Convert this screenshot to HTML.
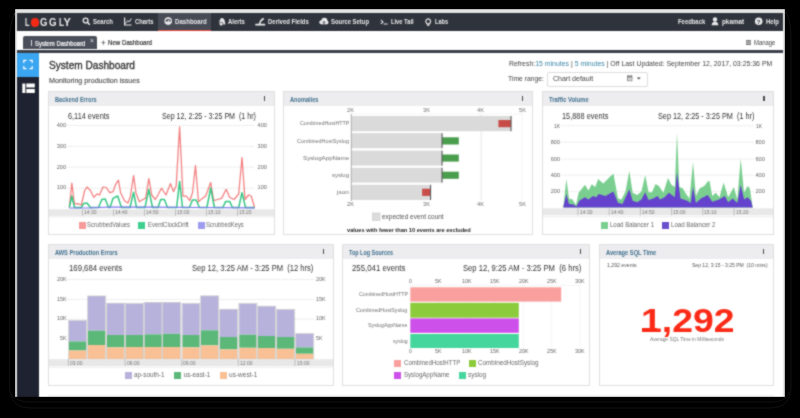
<!DOCTYPE html>
<html><head><meta charset="utf-8"><title>Loggly System Dashboard</title>
<style>
html,body{margin:0;padding:0;}
body{width:800px;height:418px;background:#000;position:relative;overflow:hidden;font-family:"Liberation Sans",sans-serif;}
.b{position:absolute;box-sizing:content-box;}
.t{position:absolute;white-space:nowrap;line-height:1;transform-origin:0 0;}
</style></head><body>
<svg width="0" height="0" style="position:absolute;left:0;top:0"><filter id="soft" x="-1%" y="-1%" width="102%" height="102%" color-interpolation-filters="sRGB"><feConvolveMatrix order="3" kernelMatrix="1 2 1 2 10 2 1 2 1" preserveAlpha="true" edgeMode="duplicate"/></filter></svg>
<div id="page" style="position:absolute;left:0;top:0;width:800px;height:418px;filter:url(#soft)">
<svg class="b" style="left:0;top:0" width="800" height="418"><path d="M15 13 Q9.5 22 9.5 44 L9.5 385 Q9.5 408 30 408 L770 408 Q791 408 791 386 L791 40 Q791 20 786 12" fill="none" stroke="#171717" stroke-width="1"/><path d="M10 392 Q14 402 30 402 L772 402 Q786 402 789 392" fill="none" stroke="#141414" stroke-width="1"/></svg>
<div class="b" style="left:15px;top:9px;width:770px;height:388px;background:#e4e4e4;"></div>
<div class="b" style="left:17px;top:13px;width:766px;height:384px;background:#ffffff;"></div>
<div class="b" style="left:17px;top:13px;width:766px;height:18px;background:#2f333b;"></div>
<div class="b" style="left:158px;top:13px;width:53px;height:18px;background:#464b55;"></div>
<div class="b" style="left:158px;top:29.5px;width:53px;height:1.5px;background:#e8473b;"></div>
<span class="t " style="left:25.20px;top:16.59px;font-size:11.00px;color:#e9eaec;font-weight:bold;transform:scaleX(0.655);">L</span>
<div class="b" style="left:30.5px;top:18.3px;width:8.5px;height:8.5px;border-radius:50%;background:#f42a16"></div>
<span class="t " style="left:40.30px;top:16.59px;font-size:11.00px;color:#e9eaec;font-weight:bold;transform:scaleX(0.865);">G</span>
<span class="t " style="left:49.40px;top:16.59px;font-size:11.00px;color:#e9eaec;font-weight:bold;transform:scaleX(0.888);">G</span>
<span class="t " style="left:58.80px;top:16.59px;font-size:11.00px;color:#e9eaec;font-weight:bold;transform:scaleX(0.744);">L</span>
<span class="t " style="left:63.40px;top:16.59px;font-size:11.00px;color:#e9eaec;font-weight:bold;">Y</span>
<span class="t " style="left:93.00px;top:18.27px;font-size:7.00px;color:#e9eaec;font-weight:bold;transform:scaleX(0.857);">Search</span>
<span class="t " style="left:134.50px;top:18.27px;font-size:7.00px;color:#e9eaec;font-weight:bold;transform:scaleX(0.834);">Charts</span>
<span class="t " style="left:175.00px;top:18.27px;font-size:7.00px;color:#e9eaec;font-weight:bold;transform:scaleX(0.870);">Dashboard</span>
<span class="t " style="left:228.00px;top:18.27px;font-size:7.00px;color:#e9eaec;font-weight:bold;transform:scaleX(0.847);">Alerts</span>
<span class="t " style="left:268.20px;top:18.27px;font-size:7.00px;color:#e9eaec;font-weight:bold;transform:scaleX(0.853);">Derived Fields</span>
<span class="t " style="left:331.00px;top:18.27px;font-size:7.00px;color:#e9eaec;font-weight:bold;transform:scaleX(0.842);">Source Setup</span>
<span class="t " style="left:391.00px;top:18.27px;font-size:7.00px;color:#e9eaec;font-weight:bold;transform:scaleX(0.822);">Live Tail</span>
<span class="t " style="left:435.00px;top:18.27px;font-size:7.00px;color:#e9eaec;font-weight:bold;transform:scaleX(0.796);">Labs</span>
<span class="t " style="left:678.00px;top:18.27px;font-size:7.00px;color:#e9eaec;font-weight:bold;transform:scaleX(0.842);">Feedback</span>
<span class="t " style="left:722.00px;top:18.27px;font-size:7.00px;color:#e9eaec;font-weight:bold;transform:scaleX(0.906);">pkamat</span>
<span class="t " style="left:765.70px;top:18.27px;font-size:7.00px;color:#e9eaec;font-weight:bold;transform:scaleX(0.857);">Help</span>
<svg class="b" style="left:0;top:0" width="800" height="40">
<circle cx="85.6" cy="20.6" r="2.4" fill="none" stroke="#e9eaec" stroke-width="1.3"/><line x1="87.4" y1="22.4" x2="89.8" y2="24.8" stroke="#e9eaec" stroke-width="1.5"/>
<path d="M124.6 17.5 V25 H131.6" fill="none" stroke="#e9eaec" stroke-width="1.2"/><path d="M125.5 23.5 L127.8 20.5 L129.3 22 L131.3 18.5" fill="none" stroke="#e9eaec" stroke-width="1"/>
<circle cx="168.2" cy="21.1" r="3.8" fill="#e9eaec"/><path d="M165.5 21.6 A2.7 2.5 0 0 1 170.9 21.6 Z" fill="#464b55"/><circle cx="168.6" cy="20.9" r="0.8" fill="#e9eaec"/>
<path d="M218.8 24.2 Q219.6 19.6 220.6 18.6 Q222 17.4 223.4 18.4 Q224.6 19.4 225.2 23 L225.3 24.6 Z" fill="#e9eaec"/><circle cx="221.2" cy="24" r="1.9" fill="#e9eaec" stroke="#2f333b" stroke-width="0.7"/>
<path d="M256 24.7 L264.5 24.7" fill="none" stroke="#e9eaec" stroke-width="1.7" stroke-linecap="round"/><path d="M259.6 24.4 Q260.2 20.5 263.3 18.8" fill="none" stroke="#e9eaec" stroke-width="1.6" stroke-linecap="round"/>
<circle cx="324.4" cy="20.7" r="3" fill="#e9eaec"/><circle cx="321.3" cy="22.3" r="2" fill="#e9eaec"/><circle cx="326.6" cy="22.4" r="1.9" fill="#e9eaec"/><rect x="321.3" y="22" width="5.3" height="2.3" fill="#e9eaec"/><path d="M324 24.3 V21.6 M322.9 22.6 L324 21.4 L325.1 22.6" stroke="#2f333b" stroke-width="0.9" fill="none"/>
<path d="M380.8 19.9 L383 21.9 L380.8 23.9 M383.6 24 H387.6" fill="none" stroke="#e9eaec" stroke-width="1.1"/>
<path d="M428.2 18.9 A2.4 2.4 0 0 1 430.3 22.4 L429.4 23.8 H427 L426.1 22.4 A2.4 2.4 0 0 1 428.2 18.9 Z" fill="none" stroke="#e9eaec" stroke-width="1.2"/><rect x="427" y="24.4" width="2.4" height="1.4" fill="#e9eaec"/>
<circle cx="715" cy="19.5" r="2.2" fill="#e9eaec"/><path d="M711.6 25.2 Q712 21.8 715 21.8 Q718 21.8 718.4 25.2 Z" fill="#e9eaec"/>
<circle cx="758.7" cy="21.2" r="3.8" fill="#e9eaec"/><text x="758.7" y="23.6" font-size="6" font-weight="bold" text-anchor="middle" fill="#2f333b" font-family="Liberation Sans">?</text>
</svg>
<div class="b" style="left:23px;top:36px;width:74px;height:13px;background:#4a4f5a;border-radius:2px 2px 0 0"></div>
<div class="b" style="left:30.8px;top:40px;width:1px;height:5.5px;background:#d9dbe0;"></div>
<span class="t " style="left:34.60px;top:40.27px;font-size:7.00px;color:#ffffff;-webkit-text-stroke:0.2px #ffffff;transform:scaleX(0.847);">System Dashboard</span>
<span class="t " style="left:89.50px;top:36.87px;font-size:7.00px;color:#e6e7ea;transform:scaleX(0.978);">×</span>
<span class="t " style="left:100.80px;top:38.60px;font-size:8.50px;color:#333;">+</span>
<span class="t " style="left:108.00px;top:40.04px;font-size:6.80px;color:#333;-webkit-text-stroke:0.2px #333;transform:scaleX(0.902);">New Dashboard</span>
<svg class="b" style="left:746px;top:40px" width="6" height="5"><rect x="0" y="0" width="5" height="5" fill="#7a7a7a"/><line x1="0" y1="1.7" x2="5" y2="1.7" stroke="#fff" stroke-width="0.5"/><line x1="0" y1="3.3" x2="5" y2="3.3" stroke="#fff" stroke-width="0.5"/></svg>
<span class="t " style="left:753.70px;top:40.27px;font-size:6.30px;color:#444;transform:scaleX(0.940);">Manage</span>
<div class="b" style="left:17px;top:50px;width:766px;height:3px;background:#3b3f49;"></div>
<div class="b" style="left:17px;top:53px;width:22px;height:344px;background:#1f2230;"></div>
<div class="b" style="left:17px;top:53px;width:22px;height:24px;background:#3aa5f1;"></div>
<svg class="b" style="left:17px;top:53px" width="22" height="50">
<path d="M6.8 10 V7.3 H9.5 M12.5 7.3 H15.2 V10 M15.2 13 V15.7 H12.5 M9.5 15.7 H6.8 V13" fill="none" stroke="#fff" stroke-width="1.2"/>
<rect x="5.3" y="30.5" width="3" height="9.5" fill="#fff"/><rect x="9.3" y="30.5" width="8.5" height="4" fill="#fff"/><rect x="9.3" y="36" width="8.5" height="4" fill="#fff"/>
</svg>
<span class="t " style="left:49.00px;top:59.72px;font-size:11.20px;color:#353535;-webkit-text-stroke:0.35px #353535;transform:scaleX(0.903);">System Dashboard</span>
<span class="t " style="left:49.00px;top:77.34px;font-size:7.40px;color:#505050;-webkit-text-stroke:0.15px #505050;transform:scaleX(0.966);">Monitoring production issues</span>
<span class="t" style="left:508.7px;top:60.99px;font-size:7.1px;color:#444;transform:scaleX(0.976)" id="refl">Refresh:<span style="color:#3b86a8">15 minutes</span> | <span style="color:#3b86a8">5 minutes</span> | Off Last Updated: September 12, 2017, 03:25:36 PM</span>
<span class="t " style="left:507.90px;top:76.09px;font-size:7.10px;color:#444;transform:scaleX(0.954);">Time range:</span>
<div class="b" style="left:547px;top:72px;width:98.5px;height:13px;border:1px solid #dcdcdc;border-radius:2px;background:#fff"></div>
<span class="t " style="left:553.40px;top:76.09px;font-size:7.10px;color:#444;transform:scaleX(0.989);">Chart default</span>
<svg class="b" style="left:626px;top:74px" width="18" height="10"><rect x="1" y="1.6" width="5.4" height="5.6" fill="#8a8a8a"/><rect x="1.8" y="3.6" width="3.8" height="2.9" fill="#d6d6d6"/><rect x="1.8" y="1" width="0.8" height="1.2" fill="#666"/><rect x="4.8" y="1" width="0.8" height="1.2" fill="#666"/><path d="M10.8 3.4 L14.8 3.4 L12.8 5.6 Z" fill="#444"/></svg>
<div class="b panel" style="left:48px;top:91px;width:225px;height:142px;border:1px solid #dfdfdf;background:#fff"></div>
<div class="b" style="left:49px;top:92px;width:225px;height:13.6px;background:#ededef;"></div>
<span class="t " style="left:54.50px;top:96.60px;font-size:6.50px;color:#41708f;font-weight:bold;transform:scaleX(0.861);">Backend Errors</span>
<div class="b" style="left:263.7px;top:96px;width:1.3px;height:5px;background:#4a4a4a;"></div>
<div class="b panel" style="left:283px;top:91px;width:248px;height:142px;border:1px solid #dfdfdf;background:#fff"></div>
<div class="b" style="left:284px;top:92px;width:248px;height:13.6px;background:#ededef;"></div>
<span class="t " style="left:289.50px;top:96.60px;font-size:6.50px;color:#41708f;font-weight:bold;transform:scaleX(0.867);">Anomalies</span>
<div class="b" style="left:522.1px;top:96px;width:1.3px;height:5px;background:#4a4a4a;"></div>
<div class="b panel" style="left:542px;top:91px;width:230px;height:142px;border:1px solid #dfdfdf;background:#fff"></div>
<div class="b" style="left:543px;top:92px;width:230px;height:13.6px;background:#ededef;"></div>
<span class="t " style="left:548.50px;top:96.60px;font-size:6.50px;color:#41708f;font-weight:bold;transform:scaleX(0.896);">Traffic Volume</span>
<div class="b" style="left:763.3px;top:96px;width:1.3px;height:5px;background:#4a4a4a;"></div>
<div class="b panel" style="left:48px;top:244px;width:284px;height:140px;border:1px solid #dfdfdf;background:#fff"></div>
<div class="b" style="left:49px;top:245px;width:284px;height:13.6px;background:#ededef;"></div>
<span class="t " style="left:54.50px;top:249.60px;font-size:6.50px;color:#41708f;font-weight:bold;transform:scaleX(0.868);">AWS Production Errors</span>
<div class="b" style="left:322.7px;top:249px;width:1.3px;height:5px;background:#4a4a4a;"></div>
<div class="b panel" style="left:342px;top:244px;width:246px;height:140px;border:1px solid #dfdfdf;background:#fff"></div>
<div class="b" style="left:343px;top:245px;width:246px;height:13.6px;background:#ededef;"></div>
<span class="t " style="left:348.50px;top:249.60px;font-size:6.50px;color:#41708f;font-weight:bold;transform:scaleX(0.836);">Top Log Sources</span>
<div class="b" style="left:579.9px;top:249px;width:1.3px;height:5px;background:#4a4a4a;"></div>
<div class="b panel" style="left:599px;top:244px;width:173px;height:140px;border:1px solid #dfdfdf;background:#fff"></div>
<div class="b" style="left:600px;top:245px;width:173px;height:13.6px;background:#ededef;"></div>
<span class="t " style="left:605.50px;top:249.60px;font-size:6.50px;color:#41708f;font-weight:bold;transform:scaleX(0.876);">Average SQL Time</span>
<div class="b" style="left:763.1999999999999px;top:249px;width:1.3px;height:5px;background:#4a4a4a;"></div>
<div class="b" style="left:48px;top:395px;width:726px;height:1px;background:#ececec;"></div>
<span class="t " style="left:67.50px;top:111.77px;font-size:8.30px;color:#333;transform:scaleX(0.885);">6,114 events</span>
<span class="t " style="left:161.50px;top:111.77px;font-size:8.30px;color:#333;transform:scaleX(0.856);">Sep 12, 2:25 - 3:25 PM  (1 hr)</span>
<span class="t " style="left:56.70px;top:122.76px;font-size:5.60px;color:#666;">400</span>
<span class="t " style="left:257.60px;top:122.76px;font-size:5.60px;color:#666;">400</span>
<span class="t " style="left:56.70px;top:143.66px;font-size:5.60px;color:#666;">300</span>
<span class="t " style="left:257.60px;top:143.66px;font-size:5.60px;color:#666;">300</span>
<span class="t " style="left:56.70px;top:164.56px;font-size:5.60px;color:#666;">200</span>
<span class="t " style="left:257.60px;top:164.56px;font-size:5.60px;color:#666;">200</span>
<span class="t " style="left:56.70px;top:185.46px;font-size:5.60px;color:#666;">100</span>
<span class="t " style="left:257.60px;top:185.46px;font-size:5.60px;color:#666;">100</span>
<svg class="b" style="left:0;top:0" width="800" height="418"><line x1="67" y1="125.5" x2="254" y2="125.5" stroke="#d6d6d6" stroke-width="0.8" stroke-dasharray="1 1"/><line x1="67" y1="146.4" x2="254" y2="146.4" stroke="#d6d6d6" stroke-width="0.8" stroke-dasharray="1 1"/><line x1="67" y1="167.3" x2="254" y2="167.3" stroke="#d6d6d6" stroke-width="0.8" stroke-dasharray="1 1"/><line x1="67" y1="188.2" x2="254" y2="188.2" stroke="#d6d6d6" stroke-width="0.8" stroke-dasharray="1 1"/><rect x="49" y="209.3" width="225" height="6.5" fill="#e8e8e8"/><line x1="82.5" y1="209.3" x2="82.5" y2="215.8" stroke="#aaa" stroke-width="0.7"/><line x1="113.5" y1="209.3" x2="113.5" y2="215.8" stroke="#aaa" stroke-width="0.7"/><line x1="144.5" y1="209.3" x2="144.5" y2="215.8" stroke="#aaa" stroke-width="0.7"/><line x1="175.5" y1="209.3" x2="175.5" y2="215.8" stroke="#aaa" stroke-width="0.7"/><line x1="206.5" y1="209.3" x2="206.5" y2="215.8" stroke="#aaa" stroke-width="0.7"/><line x1="237.5" y1="209.3" x2="237.5" y2="215.8" stroke="#aaa" stroke-width="0.7"/><line x1="49" y1="216.8" x2="274" y2="216.8" stroke="#e6e6e6" stroke-width="0.8"/><polyline points="69.3,207.5 71.8,183.2 74.5,204.0 77.9,203.6 81.3,205.0 84.7,190.5 87.0,187.0 90.4,190.5 93.8,197.3 97.2,193.9 99.5,195.0 103.0,187.0 106.3,187.5 109.7,192.7 113.1,191.6 115.4,184.8 118.4,180.2 120.6,192.7 124.5,200.7 127.9,203.0 130.2,197.3 133.6,175.7 135.9,192.7 139.3,201.8 142.7,199.5 145.6,198.4 148.8,178.6 151.8,195.0 155.2,199.5 158.0,195.0 161.4,188.2 166.0,195.0 170.5,183.6 173.5,191.6 176.2,186.0 179.6,126.8 183.0,196.0 186.4,196.0 189.8,200.7 192.5,192.7 195.5,165.5 198.5,201.8 202.3,198.4 205.7,196.0 210.7,182.5 213.7,200.7 217.5,199.5 221.6,198.4 226.2,189.3 229.6,197.3 234.0,199.5 238.7,194.0 242.0,157.5 245.0,199.5 248.5,195.0 251.2,196.0 254.6,207.5" fill="none" stroke="#f37e7e" stroke-width="1.25" stroke-linejoin="round"/><polyline points="69.3,207.5 71.8,196.0 74.5,207.5 81.3,207.5 83.6,203.6 87.0,203.0 90.4,207.5 98.5,207.5 101.8,199.5 105.2,199.0 108.6,207.5 110.0,207.5 113.0,198.4 117.7,196.0 121.5,207.5 130.0,207.5 133.6,192.3 136.5,207.5 145.0,207.5 148.8,189.3 152.5,207.5 158.0,207.5 160.7,199.5 164.4,199.5 167.5,207.5 176.6,207.5 179.6,181.4 182.5,207.5 189.4,207.5 192.5,200.0 196.2,200.0 199.4,207.5 206.9,207.5 210.7,188.0 214.4,207.5 222.8,207.5 225.7,201.4 229.6,201.4 232.5,207.5 238.7,207.5 242.0,192.7 245.5,207.5 254.6,207.5" fill="none" stroke="#35c683" stroke-width="1.5" stroke-linejoin="round"/><polyline points="69.3,208.0 90.0,207.8 110.0,207.0 150.0,207.2 200.0,207.5 254.6,207.8" fill="none" stroke="#7a76ee" stroke-width="1.2"/></svg>
<span class="t " style="left:84.00px;top:209.93px;font-size:5.40px;color:#777;transform:scaleX(0.925);">14:30</span>
<span class="t " style="left:115.00px;top:209.93px;font-size:5.40px;color:#777;transform:scaleX(0.925);">14:40</span>
<span class="t " style="left:146.00px;top:209.93px;font-size:5.40px;color:#777;transform:scaleX(0.925);">14:50</span>
<span class="t " style="left:177.00px;top:209.93px;font-size:5.40px;color:#777;transform:scaleX(0.925);">15:00</span>
<span class="t " style="left:208.00px;top:209.93px;font-size:5.40px;color:#777;transform:scaleX(0.925);">15:10</span>
<span class="t " style="left:239.00px;top:209.93px;font-size:5.40px;color:#777;transform:scaleX(0.925);">15:20</span>
<div class="b" style="left:78.6px;top:221.7px;width:7px;height:7px;background:#f69a9a;"></div>
<span class="t " style="left:87.00px;top:221.98px;font-size:6.40px;color:#686868;transform:scaleX(0.925);">ScrubbedValues</span>
<div class="b" style="left:138.3px;top:221.7px;width:7px;height:7px;background:#3fcf8e;"></div>
<span class="t " style="left:147.60px;top:221.98px;font-size:6.40px;color:#686868;transform:scaleX(0.925);">EventClockDrift</span>
<div class="b" style="left:197.6px;top:221.7px;width:7px;height:7px;background:#9f9cf0;"></div>
<span class="t " style="left:206.20px;top:221.98px;font-size:6.40px;color:#686868;transform:scaleX(0.908);">ScrubbedKeys</span>
<svg class="b" style="left:0;top:0" width="800" height="418"><line x1="351" y1="114" x2="522" y2="114" stroke="#e2e2e2" stroke-width="0.8" stroke-dasharray="1 1"/><line x1="522" y1="114" x2="522" y2="200.5" stroke="#e2e2e2" stroke-width="0.8" stroke-dasharray="1 1"/><line x1="481.1" y1="114" x2="481.1" y2="200.5" stroke="#e0e0e0" stroke-width="0.8"/><rect x="351.5" y="116" width="159.5" height="15.199999999999989" fill="#dadada"/><rect x="498.4" y="120" width="12.600000000000023" height="7.200000000000003" fill="#c84d49"/><rect x="510.5" y="116" width="1.1" height="15.199999999999989" fill="#5a5a5a"/><rect x="351.5" y="133.2" width="90.5" height="15.0" fill="#dadada"/><rect x="442" y="137.3" width="16.8" height="7.199999999999989" fill="#4a9d4d"/><rect x="441.5" y="133.2" width="1.1" height="15.0" fill="#5a5a5a"/><rect x="351.5" y="150.6" width="90.5" height="15.0" fill="#dadada"/><rect x="442" y="154.5" width="16.8" height="7.099999999999994" fill="#4a9d4d"/><rect x="441.5" y="150.6" width="1.1" height="15.0" fill="#5a5a5a"/><rect x="351.5" y="167.8" width="90.5" height="14.799999999999983" fill="#dadada"/><rect x="442" y="171.7" width="16.8" height="7.100000000000023" fill="#4a9d4d"/><rect x="441.5" y="167.8" width="1.1" height="14.799999999999983" fill="#5a5a5a"/><rect x="351.5" y="184.8" width="79.0" height="15.199999999999989" fill="#dadada"/><rect x="422.1" y="188.7" width="8.399999999999977" height="7.200000000000017" fill="#c84d49"/><rect x="430.0" y="184.8" width="1.1" height="15.199999999999989" fill="#5a5a5a"/><line x1="351.3" y1="114" x2="351.3" y2="201" stroke="#999" stroke-width="0.8"/><rect x="372.5" y="213" width="7.5" height="7.5" fill="#dcdcdc" stroke="#c8c8c8" stroke-width="0.6"/></svg>
<span class="t " style="left:347.00px;top:108.06px;font-size:5.60px;color:#707070;transform:scaleX(1.022);">2K</span>
<span class="t " style="left:347.00px;top:201.86px;font-size:5.60px;color:#707070;transform:scaleX(1.022);">2K</span>
<span class="t " style="left:423.11px;top:108.06px;font-size:5.60px;color:#707070;transform:scaleX(1.022);">3K</span>
<span class="t " style="left:423.11px;top:201.86px;font-size:5.60px;color:#707070;transform:scaleX(1.022);">3K</span>
<span class="t " style="left:477.10px;top:108.06px;font-size:5.60px;color:#707070;transform:scaleX(1.022);">4K</span>
<span class="t " style="left:477.10px;top:201.86px;font-size:5.60px;color:#707070;transform:scaleX(1.022);">4K</span>
<span class="t " style="left:518.99px;top:108.06px;font-size:5.60px;color:#707070;transform:scaleX(1.022);">5K</span>
<span class="t " style="left:518.99px;top:201.86px;font-size:5.60px;color:#707070;transform:scaleX(1.022);">5K</span>
<span class="t " style="left:299.50px;top:120.35px;font-size:6.20px;color:#707070;transform:scaleX(0.865);">CombinedHostHTTP</span>
<span class="t " style="left:297.00px;top:137.55px;font-size:6.20px;color:#707070;transform:scaleX(0.872);">CombinedHostSyslog</span>
<span class="t " style="left:303.00px;top:154.85px;font-size:6.20px;color:#707070;">SyslogAppName</span>
<span class="t " style="left:332.00px;top:172.05px;font-size:6.20px;color:#707070;transform:scaleX(0.967);">syslog</span>
<span class="t " style="left:337.00px;top:189.25px;font-size:6.20px;color:#707070;transform:scaleX(1.055);">json</span>
<span class="t " style="left:382.00px;top:214.16px;font-size:6.90px;color:#555;transform:scaleX(0.941);">expected event count</span>
<span class="t " style="left:346.70px;top:227.61px;font-size:5.90px;color:#222;font-weight:bold;transform:scaleX(0.959);">values with fewer than 10 events are excluded</span>
<span class="t " style="left:562.00px;top:111.67px;font-size:8.30px;color:#333;transform:scaleX(0.890);">15,888 events</span>
<span class="t " style="left:658.00px;top:111.67px;font-size:8.30px;color:#333;transform:scaleX(0.878);">Sep 12, 2:25 - 3:25 PM  (1 hr)</span>
<span class="t " style="left:553.80px;top:123.56px;font-size:5.60px;color:#666;transform:scaleX(0.905);">1K</span>
<span class="t " style="left:755.50px;top:123.56px;font-size:5.60px;color:#666;transform:scaleX(0.905);">1K</span>
<span class="t " style="left:550.70px;top:140.16px;font-size:5.60px;color:#666;">800</span>
<span class="t " style="left:755.50px;top:140.16px;font-size:5.60px;color:#666;">800</span>
<span class="t " style="left:550.70px;top:156.86px;font-size:5.60px;color:#666;">600</span>
<span class="t " style="left:755.50px;top:156.86px;font-size:5.60px;color:#666;">600</span>
<span class="t " style="left:550.70px;top:173.06px;font-size:5.60px;color:#666;">400</span>
<span class="t " style="left:755.50px;top:173.06px;font-size:5.60px;color:#666;">400</span>
<span class="t " style="left:550.70px;top:189.46px;font-size:5.60px;color:#666;">200</span>
<span class="t " style="left:755.50px;top:189.46px;font-size:5.60px;color:#666;">200</span>
<svg class="b" style="left:0;top:0" width="800" height="418"><line x1="562" y1="125.7" x2="753" y2="125.7" stroke="#d6d6d6" stroke-width="0.8" stroke-dasharray="1 1"/><line x1="562" y1="142.3" x2="753" y2="142.3" stroke="#d6d6d6" stroke-width="0.8" stroke-dasharray="1 1"/><line x1="562" y1="159" x2="753" y2="159" stroke="#d6d6d6" stroke-width="0.8" stroke-dasharray="1 1"/><line x1="562" y1="175.2" x2="753" y2="175.2" stroke="#d6d6d6" stroke-width="0.8" stroke-dasharray="1 1"/><line x1="562" y1="191.6" x2="753" y2="191.6" stroke="#d6d6d6" stroke-width="0.8" stroke-dasharray="1 1"/><polygon points="563.2,207.5 566.4,179.0 569.0,198.4 572.5,199.5 576.0,205.0 578.6,192.7 585.0,184.8 588.4,190.5 591.8,184.3 595.2,187.0 598.2,179.0 603.2,183.6 613.4,173.4 618.0,198.4 621.4,199.5 625.5,191.6 629.3,171.0 632.7,192.7 637.3,195.0 641.4,191.6 645.2,175.2 648.6,192.3 652.0,192.3 655.5,184.0 658.9,186.0 663.4,192.7 668.0,178.0 671.4,184.8 674.8,187.0 677.0,132.5 679.3,187.0 682.7,188.2 686.1,193.9 689.5,198.4 693.0,162.0 695.9,196.0 699.8,188.2 704.3,186.0 707.7,181.4 709.5,181.0 712.3,196.0 715.7,192.7 719.5,197.3 723.6,182.5 728.2,197.3 733.9,187.0 737.3,199.5 740.7,158.6 744.1,192.7 747.5,186.0 749.8,188.2 752.7,207.5" fill="#7acf90"/><polygon points="563.2,207.5 566.4,193.9 569.0,204.0 573.6,204.5 576.4,206.4 579.3,200.7 585.0,197.3 588.4,199.5 593.0,196.0 596.4,197.3 598.6,193.9 605.5,196.0 613.4,191.6 618.0,202.7 622.5,204.0 629.3,189.3 632.7,200.7 637.3,202.3 641.4,199.5 645.2,192.3 648.6,200.0 653.2,198.4 657.7,196.0 660.0,199.5 664.5,197.3 669.0,192.7 674.8,197.3 677.0,172.3 680.5,198.4 687.3,200.7 690.7,203.0 693.0,187.0 695.9,203.0 700.9,198.4 707.7,195.0 712.3,201.8 719.1,199.5 724.8,196.0 728.2,202.3 732.7,198.4 737.3,203.0 740.7,184.8 744.1,199.5 747.5,197.3 751.0,200.7 752.7,207.5" fill="#6442cd"/><rect x="543" y="208.3" width="230" height="7" fill="#e8e8e8"/><line x1="578.0" y1="208.3" x2="578.0" y2="215.3" stroke="#aaa" stroke-width="0.7"/><line x1="609.2" y1="208.3" x2="609.2" y2="215.3" stroke="#aaa" stroke-width="0.7"/><line x1="640.4" y1="208.3" x2="640.4" y2="215.3" stroke="#aaa" stroke-width="0.7"/><line x1="671.6" y1="208.3" x2="671.6" y2="215.3" stroke="#aaa" stroke-width="0.7"/><line x1="702.8" y1="208.3" x2="702.8" y2="215.3" stroke="#aaa" stroke-width="0.7"/><line x1="734.0" y1="208.3" x2="734.0" y2="215.3" stroke="#aaa" stroke-width="0.7"/><line x1="543" y1="216.8" x2="773" y2="216.8" stroke="#e6e6e6" stroke-width="0.8"/></svg>
<span class="t " style="left:579.50px;top:209.63px;font-size:5.40px;color:#777;transform:scaleX(0.925);">14:30</span>
<span class="t " style="left:610.70px;top:209.63px;font-size:5.40px;color:#777;transform:scaleX(0.925);">14:40</span>
<span class="t " style="left:641.90px;top:209.63px;font-size:5.40px;color:#777;transform:scaleX(0.925);">14:50</span>
<span class="t " style="left:673.10px;top:209.63px;font-size:5.40px;color:#777;transform:scaleX(0.925);">15:00</span>
<span class="t " style="left:704.30px;top:209.63px;font-size:5.40px;color:#777;transform:scaleX(0.925);">15:10</span>
<span class="t " style="left:735.50px;top:209.63px;font-size:5.40px;color:#777;transform:scaleX(0.925);">15:20</span>
<div class="b" style="left:600.6px;top:221.5px;width:7px;height:7px;background:#7acf90;"></div>
<span class="t " style="left:609.50px;top:221.78px;font-size:6.40px;color:#686868;transform:scaleX(0.946);">Load Balancer 1</span>
<div class="b" style="left:662px;top:221.5px;width:7px;height:7px;background:#6a4fcd;"></div>
<span class="t " style="left:671.00px;top:221.78px;font-size:6.40px;color:#686868;transform:scaleX(0.955);">Load Balancer 2</span>
<span class="t " style="left:68.70px;top:264.37px;font-size:8.30px;color:#333;transform:scaleX(0.935);">169,684 events</span>
<span class="t " style="left:192.40px;top:264.37px;font-size:8.30px;color:#333;transform:scaleX(0.914);">Sep 12, 3:25 AM - 3:25 PM  (12 hrs)</span>
<span class="t " style="left:56.80px;top:276.66px;font-size:5.60px;color:#666;transform:scaleX(0.973);">20K</span>
<span class="t " style="left:315.60px;top:276.66px;font-size:5.60px;color:#666;transform:scaleX(0.973);">20K</span>
<span class="t " style="left:56.80px;top:296.66px;font-size:5.60px;color:#666;transform:scaleX(0.973);">15K</span>
<span class="t " style="left:315.60px;top:296.66px;font-size:5.60px;color:#666;transform:scaleX(0.973);">15K</span>
<span class="t " style="left:56.80px;top:316.46px;font-size:5.60px;color:#666;transform:scaleX(0.973);">10K</span>
<span class="t " style="left:315.60px;top:316.46px;font-size:5.60px;color:#666;transform:scaleX(0.973);">10K</span>
<span class="t " style="left:60.10px;top:336.46px;font-size:5.60px;color:#666;transform:scaleX(0.934);">5K</span>
<span class="t " style="left:315.60px;top:336.46px;font-size:5.60px;color:#666;transform:scaleX(0.934);">5K</span>
<svg class="b" style="left:0;top:0" width="800" height="418"><line x1="67" y1="279.4" x2="314" y2="279.4" stroke="#d6d6d6" stroke-width="0.8" stroke-dasharray="1 1"/><line x1="67" y1="299.4" x2="314" y2="299.4" stroke="#d6d6d6" stroke-width="0.8" stroke-dasharray="1 1"/><line x1="67" y1="319.2" x2="314" y2="319.2" stroke="#d6d6d6" stroke-width="0.8" stroke-dasharray="1 1"/><line x1="67" y1="339.2" x2="314" y2="339.2" stroke="#d6d6d6" stroke-width="0.8" stroke-dasharray="1 1"/><rect x="69" y="320.6" width="17.4" height="20.799999999999955" fill="#b7b2dc"/><rect x="69" y="341.4" width="17.4" height="9.100000000000023" fill="#5bb879"/><rect x="69" y="350.5" width="17.4" height="8.699999999999989" fill="#f8c094"/><rect x="68.65" y="320.6" width="18.099999999999998" height="38.599999999999966" fill="none" stroke="#c9c9c9" stroke-width="0.7"/><rect x="88" y="296" width="17.4" height="34.69999999999999" fill="#b7b2dc"/><rect x="88" y="330.7" width="17.4" height="14.300000000000011" fill="#5bb879"/><rect x="88" y="345" width="17.4" height="14.199999999999989" fill="#f8c094"/><rect x="87.65" y="296" width="18.099999999999998" height="63.19999999999999" fill="none" stroke="#c9c9c9" stroke-width="0.7"/><rect x="107" y="303.2" width="17.4" height="31.80000000000001" fill="#b7b2dc"/><rect x="107" y="335" width="17.4" height="12.399999999999977" fill="#5bb879"/><rect x="107" y="347.4" width="17.4" height="11.800000000000011" fill="#f8c094"/><rect x="106.65" y="303.2" width="18.099999999999998" height="56.0" fill="none" stroke="#c9c9c9" stroke-width="0.7"/><rect x="125.7" y="303.6" width="17.4" height="31.399999999999977" fill="#b7b2dc"/><rect x="125.7" y="335" width="17.4" height="12" fill="#5bb879"/><rect x="125.7" y="347" width="17.4" height="12.199999999999989" fill="#f8c094"/><rect x="125.35000000000001" y="303.6" width="18.099999999999998" height="55.599999999999966" fill="none" stroke="#c9c9c9" stroke-width="0.7"/><rect x="144.4" y="302.4" width="17.4" height="31.900000000000034" fill="#b7b2dc"/><rect x="144.4" y="334.3" width="17.4" height="12.699999999999989" fill="#5bb879"/><rect x="144.4" y="347" width="17.4" height="12.199999999999989" fill="#f8c094"/><rect x="144.05" y="302.4" width="18.099999999999998" height="56.80000000000001" fill="none" stroke="#c9c9c9" stroke-width="0.7"/><rect x="163" y="302.4" width="17.4" height="31.400000000000034" fill="#b7b2dc"/><rect x="163" y="333.8" width="17.4" height="13.199999999999989" fill="#5bb879"/><rect x="163" y="347" width="17.4" height="12.199999999999989" fill="#f8c094"/><rect x="162.65" y="302.4" width="18.099999999999998" height="56.80000000000001" fill="none" stroke="#c9c9c9" stroke-width="0.7"/><rect x="182.3" y="303.6" width="17.4" height="31.399999999999977" fill="#b7b2dc"/><rect x="182.3" y="335" width="17.4" height="12.399999999999977" fill="#5bb879"/><rect x="182.3" y="347.4" width="17.4" height="11.800000000000011" fill="#f8c094"/><rect x="181.95000000000002" y="303.6" width="18.099999999999998" height="55.599999999999966" fill="none" stroke="#c9c9c9" stroke-width="0.7"/><rect x="201" y="295.9" width="17.4" height="34.400000000000034" fill="#b7b2dc"/><rect x="201" y="330.3" width="17.4" height="15.099999999999966" fill="#5bb879"/><rect x="201" y="345.4" width="17.4" height="13.800000000000011" fill="#f8c094"/><rect x="200.65" y="295.9" width="18.099999999999998" height="63.30000000000001" fill="none" stroke="#c9c9c9" stroke-width="0.7"/><rect x="220" y="309.3" width="17.4" height="27.69999999999999" fill="#b7b2dc"/><rect x="220" y="337" width="17.4" height="12.399999999999977" fill="#5bb879"/><rect x="220" y="349.4" width="17.4" height="9.800000000000011" fill="#f8c094"/><rect x="219.65" y="309.3" width="18.099999999999998" height="49.89999999999998" fill="none" stroke="#c9c9c9" stroke-width="0.7"/><rect x="239.2" y="303.6" width="17.4" height="31.099999999999966" fill="#b7b2dc"/><rect x="239.2" y="334.7" width="17.4" height="13.100000000000023" fill="#5bb879"/><rect x="239.2" y="347.8" width="17.4" height="11.399999999999977" fill="#f8c094"/><rect x="238.85" y="303.6" width="18.099999999999998" height="55.599999999999966" fill="none" stroke="#c9c9c9" stroke-width="0.7"/><rect x="258" y="306.2" width="17.4" height="29.80000000000001" fill="#b7b2dc"/><rect x="258" y="336" width="17.4" height="12" fill="#5bb879"/><rect x="258" y="348" width="17.4" height="11.199999999999989" fill="#f8c094"/><rect x="257.65" y="306.2" width="18.099999999999998" height="53.0" fill="none" stroke="#c9c9c9" stroke-width="0.7"/><rect x="277" y="309.6" width="17.4" height="27.399999999999977" fill="#b7b2dc"/><rect x="277" y="337" width="17.4" height="11.800000000000011" fill="#5bb879"/><rect x="277" y="348.8" width="17.4" height="10.399999999999977" fill="#f8c094"/><rect x="276.65" y="309.6" width="18.099999999999998" height="49.599999999999966" fill="none" stroke="#c9c9c9" stroke-width="0.7"/><rect x="296" y="333.7" width="17.4" height="13.699999999999989" fill="#b7b2dc"/><rect x="296" y="347.4" width="17.4" height="6.400000000000034" fill="#5bb879"/><rect x="296" y="353.8" width="17.4" height="5.399999999999977" fill="#f8c094"/><rect x="295.65" y="333.7" width="18.099999999999998" height="25.5" fill="none" stroke="#c9c9c9" stroke-width="0.7"/><rect x="49" y="359.2" width="284" height="6.8" fill="#e8e8e8"/><line x1="68.4" y1="359.2" x2="68.4" y2="366" stroke="#aaa" stroke-width="0.7"/><line x1="125.1" y1="359.2" x2="125.1" y2="366" stroke="#aaa" stroke-width="0.7"/><line x1="181.8" y1="359.2" x2="181.8" y2="366" stroke="#aaa" stroke-width="0.7"/><line x1="238.3" y1="359.2" x2="238.3" y2="366" stroke="#aaa" stroke-width="0.7"/><line x1="295" y1="359.2" x2="295" y2="366" stroke="#aaa" stroke-width="0.7"/><line x1="49" y1="367.2" x2="333" y2="367.2" stroke="#e6e6e6" stroke-width="0.8"/></svg>
<span class="t " style="left:69.90px;top:360.73px;font-size:5.40px;color:#777;transform:scaleX(0.925);">03:00</span>
<span class="t " style="left:126.60px;top:360.73px;font-size:5.40px;color:#777;transform:scaleX(0.925);">06:00</span>
<span class="t " style="left:183.30px;top:360.73px;font-size:5.40px;color:#777;transform:scaleX(0.925);">09:00</span>
<span class="t " style="left:239.80px;top:360.73px;font-size:5.40px;color:#777;transform:scaleX(0.925);">12:00</span>
<span class="t " style="left:296.50px;top:360.73px;font-size:5.40px;color:#777;transform:scaleX(0.925);">15:00</span>
<div class="b" style="left:124.7px;top:371.6px;width:7px;height:7px;background:#b7b2dc;"></div>
<span class="t " style="left:134.00px;top:371.88px;font-size:6.40px;color:#686868;">ap-south-1</span>
<div class="b" style="left:174.2px;top:371.6px;width:7px;height:7px;background:#5bb879;"></div>
<span class="t " style="left:183.70px;top:371.88px;font-size:6.40px;color:#686868;">us-east-1</span>
<div class="b" style="left:219.6px;top:371.6px;width:7px;height:7px;background:#f8c094;"></div>
<span class="t " style="left:228.70px;top:371.88px;font-size:6.40px;color:#686868;transform:scaleX(1.020);">us-west-1</span>
<span class="t " style="left:352.40px;top:264.17px;font-size:8.30px;color:#333;transform:scaleX(0.941);">255,041 events</span>
<span class="t " style="left:462.60px;top:264.17px;font-size:8.30px;color:#333;transform:scaleX(0.923);">Sep 12, 9:25 AM - 3:25 PM  (6 hrs)</span>
<svg class="b" style="left:0;top:0" width="800" height="418"><line x1="438.4" y1="285.5" x2="438.4" y2="348" stroke="#e4e4e4" stroke-width="0.8" stroke-dasharray="1 1"/><line x1="466.7" y1="285.5" x2="466.7" y2="348" stroke="#e4e4e4" stroke-width="0.8" stroke-dasharray="1 1"/><line x1="495.0" y1="285.5" x2="495.0" y2="348" stroke="#e4e4e4" stroke-width="0.8" stroke-dasharray="1 1"/><line x1="523.3" y1="285.5" x2="523.3" y2="348" stroke="#e4e4e4" stroke-width="0.8" stroke-dasharray="1 1"/><line x1="551.6" y1="285.5" x2="551.6" y2="348" stroke="#e4e4e4" stroke-width="0.8" stroke-dasharray="1 1"/><line x1="579.9" y1="285.5" x2="579.9" y2="348" stroke="#e4e4e4" stroke-width="0.8" stroke-dasharray="1 1"/><line x1="410" y1="285.5" x2="581" y2="285.5" stroke="#e4e4e4" stroke-width="0.8" stroke-dasharray="1 1"/><rect x="410.3" y="287.3" width="150.9" height="14.3" fill="#f9a09f"/><rect x="410.3" y="302.8" width="108.5" height="14.9" fill="#8ccb3c"/><rect x="410.3" y="318.4" width="108.5" height="14.4" fill="#cc50e9"/><rect x="410.3" y="334" width="108.5" height="14.0" fill="#45d69d"/></svg>
<span class="t " style="left:408.70px;top:279.26px;font-size:5.60px;color:#666;transform:scaleX(0.899);">0</span>
<span class="t " style="left:408.70px;top:349.06px;font-size:5.60px;color:#666;transform:scaleX(0.899);">0</span>
<span class="t " style="left:435.20px;top:279.26px;font-size:5.60px;color:#666;transform:scaleX(0.934);">5K</span>
<span class="t " style="left:435.20px;top:349.06px;font-size:5.60px;color:#666;transform:scaleX(0.934);">5K</span>
<span class="t " style="left:461.95px;top:279.26px;font-size:5.60px;color:#666;transform:scaleX(0.953);">10K</span>
<span class="t " style="left:461.95px;top:349.06px;font-size:5.60px;color:#666;transform:scaleX(0.953);">10K</span>
<span class="t " style="left:490.25px;top:279.26px;font-size:5.60px;color:#666;transform:scaleX(0.953);">15K</span>
<span class="t " style="left:490.25px;top:349.06px;font-size:5.60px;color:#666;transform:scaleX(0.953);">15K</span>
<span class="t " style="left:518.55px;top:279.26px;font-size:5.60px;color:#666;transform:scaleX(0.953);">20K</span>
<span class="t " style="left:518.55px;top:349.06px;font-size:5.60px;color:#666;transform:scaleX(0.953);">20K</span>
<span class="t " style="left:546.85px;top:279.26px;font-size:5.60px;color:#666;transform:scaleX(0.953);">25K</span>
<span class="t " style="left:546.85px;top:349.06px;font-size:5.60px;color:#666;transform:scaleX(0.953);">25K</span>
<span class="t " style="left:575.15px;top:279.26px;font-size:5.60px;color:#666;transform:scaleX(0.953);">30K</span>
<span class="t " style="left:575.15px;top:349.06px;font-size:5.60px;color:#666;transform:scaleX(0.953);">30K</span>
<span class="t " style="left:358.70px;top:291.35px;font-size:6.20px;color:#707070;transform:scaleX(0.857);">CombinedHostHTTP</span>
<span class="t " style="left:356.30px;top:307.15px;font-size:6.20px;color:#707070;transform:scaleX(0.862);">CombinedHostSyslog</span>
<span class="t " style="left:368.20px;top:322.45px;font-size:6.20px;color:#707070;transform:scaleX(0.855);">SyslogAppName</span>
<span class="t " style="left:393.00px;top:337.85px;font-size:6.20px;color:#707070;transform:scaleX(0.836);">syslog</span>
<div class="b" style="left:394px;top:360.1px;width:7px;height:7px;background:#f9a09f;"></div>
<span class="t " style="left:404.00px;top:360.38px;font-size:6.40px;color:#686868;transform:scaleX(0.954);">CombinedHostHTTP</span>
<div class="b" style="left:469px;top:360.1px;width:7px;height:7px;background:#8ccb3c;"></div>
<span class="t " style="left:477.80px;top:360.38px;font-size:6.40px;color:#686868;transform:scaleX(0.986);">CombinedHostSyslog</span>
<div class="b" style="left:394px;top:371.9px;width:7px;height:7px;background:#cc50e9;"></div>
<span class="t " style="left:404.00px;top:372.18px;font-size:6.40px;color:#686868;transform:scaleX(0.954);">SyslogAppName</span>
<div class="b" style="left:459.4px;top:371.9px;width:7px;height:7px;background:#45d69d;"></div>
<span class="t " style="left:468.00px;top:372.18px;font-size:6.40px;color:#686868;">syslog</span>
<span class="t " style="left:607.00px;top:262.56px;font-size:5.60px;color:#555;transform:scaleX(0.923);">1,292 events</span>
<span class="t " style="left:691.70px;top:262.56px;font-size:5.60px;color:#555;transform:scaleX(0.900);">Sep 12, 3:15 - 3:25 PM  (10 mins)</span>
<span class="t " style="left:641.20px;top:304.04px;font-size:33.50px;color:#fb2a16;font-weight:bold;transform:scaleX(1.116);">1,292</span>
<div class="b" style="left:641.5px;top:328.4px;width:15.5px;height:3.8px;background:#fb2a16;"></div>
<span class="t " style="left:650.10px;top:337.31px;font-size:5.30px;color:#777;transform:scaleX(0.919);">Average SQL Time in Milliseconds</span>
</div>
</body></html>
